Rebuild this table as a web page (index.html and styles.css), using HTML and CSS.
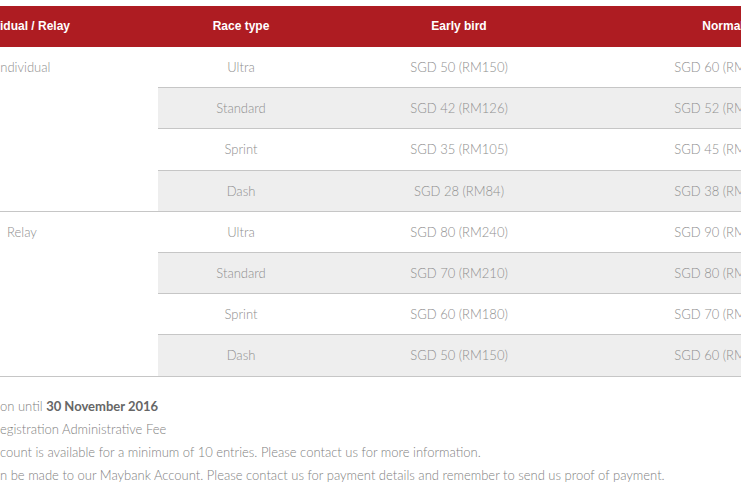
FILE: index.html
```html
<!DOCTYPE html>
<html lang="en">
<head>
<meta charset="utf-8">
<title>Race fees</title>
<link rel="stylesheet" href="styles.css">
</head>
<body>
<div class="page">
<table class="fees">
  <thead>
    <tr>
      <th class="c-cat">Individual / Relay</th>
      <th class="c-type">Race type</th>
      <th class="c-early">Early bird</th>
      <th class="c-normal">Normal</th>
    </tr>
  </thead>
  <tbody>
    <tr>
      <td class="cat" rowspan="4">Individual</td>
      <td>Ultra</td><td>SGD 50 (RM150)</td><td>SGD 60 (RM180)</td>
    </tr>
    <tr class="alt"><td>Standard</td><td>SGD 42 (RM126)</td><td>SGD 52 (RM156)</td></tr>
    <tr><td>Sprint</td><td>SGD 35 (RM105)</td><td>SGD 45 (RM135)</td></tr>
    <tr class="alt"><td>Dash</td><td>SGD 28 (RM84)</td><td>SGD 38 (RM114)</td></tr>
    <tr>
      <td class="cat relay" rowspan="4">Relay</td>
      <td>Ultra</td><td>SGD 80 (RM240)</td><td>SGD 90 (RM270)</td>
    </tr>
    <tr class="alt"><td>Standard</td><td>SGD 70 (RM210)</td><td>SGD 80 (RM240)</td></tr>
    <tr><td>Sprint</td><td>SGD 60 (RM180)</td><td>SGD 70 (RM210)</td></tr>
    <tr class="alt"><td>Dash</td><td>SGD 50 (RM150)</td><td>SGD 60 (RM180)</td></tr>
  </tbody>
</table>
<div class="notes">
  <p>on until <strong>30 November 2016</strong></p>
  <p>egistration Administrative Fee</p>
  <p>count is available for a minimum of 10 entries. Please contact us for more information.</p>
  <p>n be made to our Maybank Account. Please contact us for payment details and remember to send us proof of payment.</p>
</div>
</div>
</body>
</html>
```
FILE: styles.css
```css
html, body {
  margin: 0;
  padding: 0;
  overflow: hidden;
  background: #ffffff;
}
.page {
  width: 741px;
  height: 486px;
  overflow: hidden;
  padding-top: 6px;
  box-sizing: border-box;
}
.fees {
  border-collapse: separate;
  border-spacing: 0;
  margin-left: -44px;
  table-layout: fixed;
  width: 896px;
  font-family: "Lato", "Liberation Sans", sans-serif;
  font-weight: 300;
  font-size: 13px;
  color: #8e8e8e;
}
.fees th {
  background: #ae1c22;
  color: #ffffff;
  font-family: "Liberation Sans", Arial, sans-serif;
  font-weight: bold;
  font-size: 12px;
  line-height: 41px;
  padding: 0;
  text-align: center;
}
.fees th.c-cat { width: 202px; text-align: left; padding-left: 16px; box-sizing: border-box; }
.fees th.c-type { width: 166px; }
.fees th.c-early { width: 270px; }
.fees th.c-normal { width: 258px; }
.fees td {
  padding: 0;
  line-height: 40.2px;
  text-align: center;
  border-bottom: 1px solid #c6c6c6;
}
.fees td.cat {
  text-align: left;
  vertical-align: top;
  padding-left: 41px;
  background: #ffffff;
}
.fees td.cat.relay {
  padding-left: 51px;
}
.fees tr.alt td {
  background: #eeeeee;
}
.notes {
  margin-top: 18px;
  font-family: "Lato", "Liberation Sans", sans-serif;
  font-weight: 300;
  font-size: 13px;
  color: #7f7f7f;
}
.notes p {
  margin: 0;
  line-height: 23px;
}
.notes strong {
  font-weight: 700;
  color: #666666;
}
```
